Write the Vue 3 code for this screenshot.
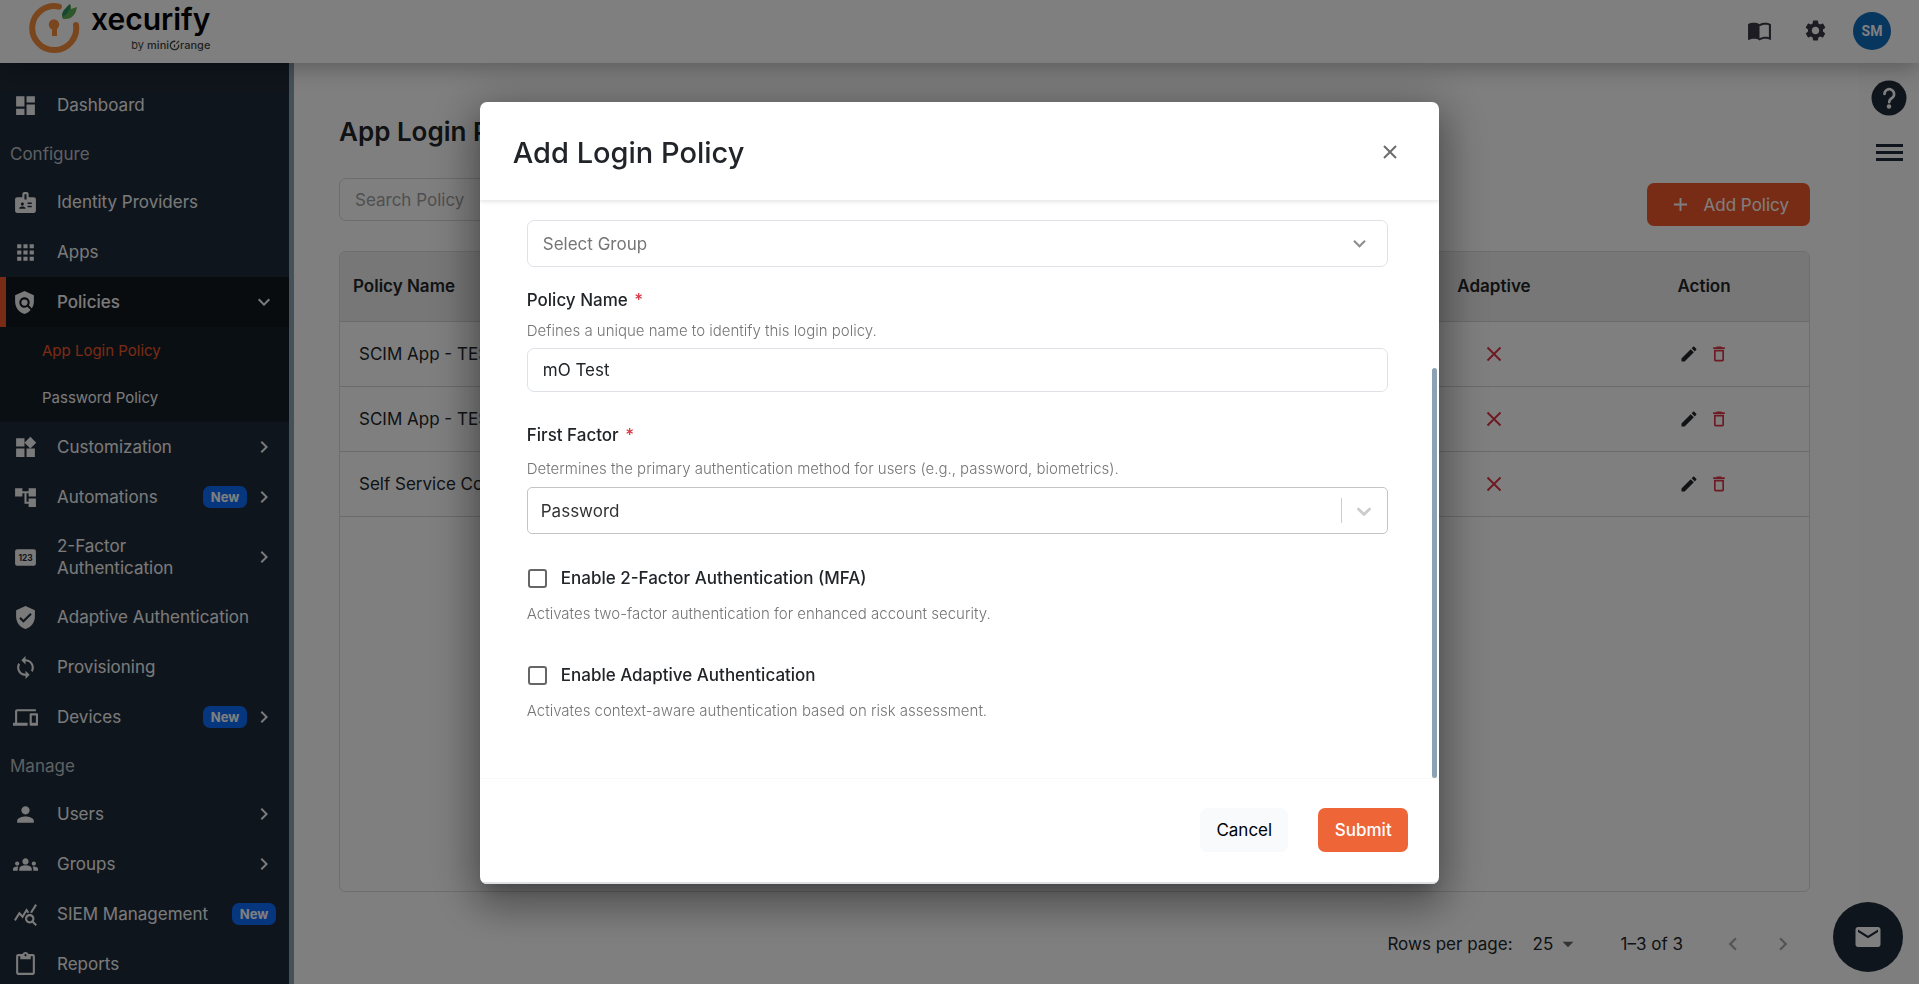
<script setup>
import { ref } from 'vue'

const icons = {
  dashboard: 'M3 13h8V3H3v10zm0 8h8v-6H3v6zm10 0h8V11h-8v10zm0-18v6h8V3h-8z',
  badge: 'M20 7h-5V4c0-1.1-.9-2-2-2h-2c-1.1 0-2 .9-2 2v3H4c-1.1 0-2 .9-2 2v11c0 1.1.9 2 2 2h16c1.1 0 2-.9 2-2V9c0-1.1-.9-2-2-2zM9 12c.83 0 1.5.67 1.5 1.5S9.83 15 9 15s-1.5-.67-1.5-1.5S8.17 12 9 12zm3 6H6v-.75c0-1 2-1.5 3-1.5s3 .5 3 1.5V18zm1-9h-2V4h2v5zm5 7.5h-4V15h4v1.5zm0-3h-4V12h4v1.5z',
  apps: 'M4 8h4V4H4v4zm6 12h4v-4h-4v4zm-6 0h4v-4H4v4zm0-6h4v-4H4v4zm6 0h4v-4h-4v4zm6-10v4h4V4h-4zm-6 4h4V4h-4v4zm6 6h4v-4h-4v4zm0 6h4v-4h-4v4z',
  policy: 'M21 5l-9-4-9 4v6c0 5.55 3.84 10.74 9 12 2.3-.56 4.33-1.9 5.88-3.71l-3.12-3.12c-1.94 1.29-4.58 1.07-6.29-.64-1.95-1.95-1.95-5.12 0-7.07 1.95-1.95 5.12-1.95 7.07 0 1.71 1.71 1.92 4.35.64 6.29l2.9 2.9C20.29 15.69 21 13.38 21 11V5zM12 9a3 3 0 1 0 0 6 3 3 0 0 0 0-6z',
  widgets: 'M13 13v8h8v-8h-8zM3 21h8v-8H3v8zM3 3v8h8V3H3zm13.66-1.31L11 7.34 16.66 13l5.66-5.66-5.66-5.65z',
  tree: 'M22 11V3h-7v3H9V3H2v8h7V8h2v10h4v3h7v-8h-7v3h-2V8h2v3z',
  shield: 'M12 1 3 5v6c0 5.55 3.84 10.74 9 12 5.16-1.26 9-6.45 9-12V5l-9-4zm-2 16-4-4 1.41-1.41L10 14.17l6.59-6.59L18 9l-8 8z',
  sync: 'M12 4V1L8 5l4 4V6c3.31 0 6 2.69 6 6 0 1.01-.25 1.97-.7 2.8l1.46 1.46C19.54 15.03 20 13.57 20 12c0-4.42-3.58-8-8-8zm0 14c-3.31 0-6-2.69-6-6 0-1.01.25-1.97.7-2.8L5.24 7.74C4.46 8.97 4 10.43 4 12c0 4.42 3.58 8 8 8v3l4-4-4-4v3z',
  devices: 'M4 6h18V4H4c-1.1 0-2 .9-2 2v11H0v3h14v-3H4V6zm19 2h-6c-.55 0-1 .45-1 1v10c0 .55.45 1 1 1h6c.55 0 1-.45 1-1V9c0-.55-.45-1-1-1zm-1 9h-4v-7h4v7z',
  person: 'M12 12c2.21 0 4-1.79 4-4s-1.79-4-4-4-4 1.79-4 4 1.79 4 4 4zm0 2c-2.67 0-8 1.34-8 4v2h16v-2c0-2.66-5.33-4-8-4z',
  groups: 'M12 12.75c1.63 0 3.07.39 4.24.9 1.08.48 1.76 1.56 1.76 2.73V18H6v-1.61c0-1.18.68-2.26 1.76-2.73 1.17-.52 2.61-.91 4.24-.91zM4 13c1.1 0 2-.9 2-2s-.9-2-2-2-2 .9-2 2 .9 2 2 2zm1.13 1.1c-.37-.06-.74-.1-1.13-.1-.99 0-1.93.21-2.78.58C.48 14.9 0 15.62 0 16.43V18h4.5v-1.61c0-.83.23-1.61.63-2.29zM20 13c1.1 0 2-.9 2-2s-.9-2-2-2-2 .9-2 2 .9 2 2 2zm4 3.43c0-.81-.48-1.53-1.22-1.85-.85-.37-1.79-.58-2.78-.58-.39 0-.76.04-1.13.1.4.68.63 1.46.63 2.29V18H24v-1.57zM12 6c1.66 0 3 1.34 3 3s-1.34 3-3 3-3-1.34-3-3 1.34-3 3-3z',
  stats: 'M19.88 18.47c.44-.7.7-1.51.7-2.39 0-2.49-2.01-4.5-4.5-4.5s-4.5 2.01-4.5 4.5 2.01 4.5 4.49 4.5c.88 0 1.7-.26 2.39-.7L21.58 23 23 21.58l-3.12-3.11zm-3.8.11c-1.38 0-2.5-1.12-2.5-2.5s1.12-2.5 2.5-2.5 2.5 1.12 2.5 2.5-1.12 2.5-2.5 2.5zm-.36-8.5c-.74.02-1.45.18-2.1.45l-.55-.83-3.8 6.18-3.01-3.52-3.63 5.81L1 17l5-8 3 3.5L13 6l2.72 4.08zm2.59.5c-.64-.28-1.33-.45-2.05-.49L21.38 2 23 3.18l-4.69 7.4z',
  clipboard: 'M19 2h-4.18C14.4.84 13.3 0 12 0c-1.3 0-2.4.84-2.82 2H5c-1.1 0-2 .9-2 2v16c0 1.1.9 2 2 2h14c1.1 0 2-.9 2-2V4c0-1.1-.9-2-2-2zm-7 0c.55 0 1 .45 1 1s-.45 1-1 1-1-.45-1-1 .45-1 1-1zm7 18H5V4h2v3h10V4h2v16z',
  right: 'M10 6 8.59 7.41 13.17 12l-4.58 4.59L10 18l6-6z',
  left: 'M15.41 7.41 14 6l-6 6 6 6 1.41-1.41L10.83 12z',
  down: 'M7.41 8.59 12 13.17l4.59-4.58L18 10l-6 6-6-6z',
  caret: 'M7 10l5 5 5-5z',
  book: 'M21 5c-1.11-.35-2.33-.5-3.5-.5-1.95 0-4.05.4-5.5 1.5-1.45-1.1-3.55-1.5-5.5-1.5S2.45 4.9 1 6v14.65c0 .25.25.5.5.5.1 0 .15-.05.25-.05C3.1 20.45 5.05 20 6.5 20c1.95 0 4.05.4 5.5 1.5 1.35-.85 3.8-1.5 5.5-1.5 1.65 0 3.35.3 4.75 1.05.1.05.15.05.25.05.25 0 .5-.25.5-.5V6c-.6-.45-1.25-.75-2-1zm0 13.5c-1.1-.35-2.3-.5-3.5-.5-1.7 0-4.15.65-5.5 1.5V8c1.35-.85 3.8-1.5 5.5-1.5 1.2 0 2.4.15 3.5.5v11.5z',
  gear: 'M19.14 12.94c.04-.3.06-.61.06-.94 0-.32-.02-.64-.07-.94l2.03-1.58c.18-.14.23-.41.12-.61l-1.92-3.32c-.12-.22-.37-.29-.59-.22l-2.39.96c-.5-.38-1.03-.7-1.62-.94l-.36-2.54c-.04-.24-.24-.41-.48-.41h-3.84c-.24 0-.43.17-.47.41l-.36 2.54c-.59.24-1.13.57-1.62.94l-2.39-.96c-.22-.08-.47 0-.59.22L2.74 8.87c-.12.21-.08.47.12.61l2.03 1.58c-.05.3-.09.63-.09.94s.02.64.07.94l-2.03 1.58c-.18.14-.23.41-.12.61l1.92 3.32c.12.22.37.29.59.22l2.39-.96c.5.38 1.03.7 1.62.94l.36 2.54c.05.24.24.41.48.41h3.84c.24 0 .44-.17.47-.41l.36-2.54c.59-.24 1.13-.56 1.62-.94l2.39.96c.22.08.47 0 .59-.22l1.92-3.32c.12-.22.07-.47-.12-.61l-2.01-1.58zM12 15.6c-1.98 0-3.6-1.62-3.6-3.6s1.62-3.6 3.6-3.6 3.6 1.62 3.6 3.6-1.62 3.6-3.6 3.6z',
  edit: 'M3 17.25V21h3.75L17.81 9.94l-3.75-3.75L3 17.25zM20.71 7.04c.39-.39.39-1.02 0-1.41l-2.34-2.34a1 1 0 0 0-1.41 0l-1.83 1.83 3.75 3.75 1.83-1.83z',
  trash: 'M6 19c0 1.1.9 2 2 2h8c1.1 0 2-.9 2-2V7H6v12zM8 9h8v10H8V9zm7.5-5-1-1h-5l-1 1H5v2h14V4h-3.5z',
  mail: 'M20 4H4c-1.1 0-1.99.9-1.99 2L2 18c0 1.1.9 2 2 2h16c1.1 0 2-.9 2-2V6c0-1.1-.9-2-2-2zm0 4-8 5-8-5V6l8 5 8-5v2z'
}

const nav = [
  { label: 'Dashboard', icon: 'dashboard' },
  { section: 'Configure' },
  { label: 'Identity Providers', icon: 'badge' },
  { label: 'Apps', icon: 'apps' },
  { label: 'Policies', icon: 'policy', open: true, children: ['App Login Policy', 'Password Policy'] },
  { label: 'Customization', icon: 'widgets', more: true },
  { label: 'Automations', icon: 'tree', more: true, isNew: true },
  { label: '2-Factor Authentication', icon: 'pin', more: true, tall: true },
  { label: 'Adaptive Authentication', icon: 'shield' },
  { label: 'Provisioning', icon: 'sync' },
  { label: 'Devices', icon: 'devices', more: true, isNew: true },
  { section: 'Manage' },
  { label: 'Users', icon: 'person', more: true },
  { label: 'Groups', icon: 'groups', more: true },
  { label: 'SIEM Management', icon: 'stats', isNew: true },
  { label: 'Reports', icon: 'clipboard' }
]

const rows = ['SCIM App - TEST', 'SCIM App - TEST', 'Self Service Console']

const search = ref('')
const group = ref('')
const policyName = ref('mO Test')
const firstFactor = ref('Password')
const mfa = ref(false)
const adaptive = ref(false)
const perPage = ref('25')
</script>

<template>
  <div class="app">
    <header class="topbar">
      <a class="brand" href="#" aria-label="xecurify by miniOrange">
        <svg class="brand-mark" viewBox="0 0 52 54" aria-hidden="true">
          <path d="M31 6.600A22 22 0 1 0 48 25" fill="none" stroke="#f58c3c" stroke-width="6" stroke-linecap="round" />
          <path d="M35 19C32 13 36 10 42 4c1 2 1 3 1 5l6-2c-1 7-5 13-14 12z" fill="#5fae57" />
          <path d="M35 17C33 12 37 9 42 4c1 5-2 9-7 13z" fill="#2f8f63" />
          <circle cx="26" cy="24.500" r="5.200" fill="#f58c3c" />
          <path d="M24 27h5v9h-5z" fill="#f58c3c" />
        </svg>
        <span class="brand-text">
          <span class="brand-name">xecurify</span>
          <span class="brand-by">by&nbsp;<b>mini</b>
            <svg viewBox="0 0 12 12" aria-hidden="true">
              <path d="M7 1.500A4.600 4.600 0 1 0 10.500 5" fill="none" stroke="#444" stroke-width="1.400" />
              <path d="M8 4l3-3M6 5v3" stroke="#444" stroke-width="1.400" />
            </svg><b>range</b>
          </span>
        </span>
      </a>
      <div class="top-actions">
        <button class="icon-btn" aria-label="Documentation"><svg viewBox="0 0 24 24"><path :d="icons.book" /></svg></button>
        <button class="icon-btn" aria-label="Settings"><svg viewBox="0 0 24 24"><path :d="icons.gear" /></svg></button>
        <button class="avatar">SM</button>
      </div>
    </header>

    <div class="shell">
      <nav class="sidebar">
        <template v-for="item in nav" :key="item.label || item.section">
          <div v-if="item.section" class="nav-section">{{ item.section }}</div>
          <a v-else href="#" class="nav-item" :class="{ open: item.open, tall: item.tall }">
            <svg v-if="item.icon === 'pin'" class="nav-icon" viewBox="0 0 24 24" aria-hidden="true">
              <path d="M4 4h16a2 2 0 0 1 2 2v12a2 2 0 0 1-2 2H4a2 2 0 0 1-2-2V6a2 2 0 0 1 2-2z" />
              <text class="pin-text" x="12" y="15" text-anchor="middle">123</text>
            </svg>
            <svg v-else class="nav-icon" viewBox="0 0 24 24" aria-hidden="true"><path :d="icons[item.icon]" /></svg>
            <span class="nav-label">{{ item.label }}</span>
            <span v-if="item.isNew" class="new">New</span>
            <svg v-if="item.more || item.open" class="nav-chevron" viewBox="0 0 24 24" aria-hidden="true">
              <path :d="item.open ? icons.down : icons.right" />
            </svg>
          </a>
          <div v-if="item.children" class="subnav">
            <a v-for="(child, i) in item.children" :key="child" href="#" :class="{ current: i === 0 }">{{ child }}</a>
          </div>
        </template>
      </nav>

      <main class="main">
        <h1>App Login Policy</h1>
        <div class="toolbar">
          <input v-model="search" class="search" type="text" placeholder="Search Policy" aria-label="Search Policy" />
          <button class="add">
            <svg viewBox="0 0 16 16" aria-hidden="true"><path d="M8 1v14M1 8h14" stroke="currentColor" stroke-width="2" /></svg>
            Add Policy
          </button>
        </div>
        <div class="table-card">
          <table>
            <thead>
              <tr>
                <th class="name">Policy Name</th>
                <th class="mid">Adaptive</th>
                <th class="mid">Action</th>
              </tr>
            </thead>
            <tbody>
              <tr v-for="(row, i) in rows" :key="i">
                <td class="name">{{ row }}</td>
                <td class="mid">
                  <svg class="cross" viewBox="0 0 16 16" role="img" aria-label="Off"><path d="M1.500 1.500l13 13M14.500 1.500l-13 13" /></svg>
                </td>
                <td class="mid">
                  <span class="row-actions">
                    <button aria-label="Edit"><svg viewBox="0 0 24 24"><path :d="icons.edit" /></svg></button>
                    <button class="danger" aria-label="Delete"><svg viewBox="0 0 24 24"><path :d="icons.trash" /></svg></button>
                  </span>
                </td>
              </tr>
            </tbody>
          </table>
        </div>
        <div class="pager">
          <label for="per-page">Rows per page:</label>
          <span class="per-page">
            <select id="per-page" v-model="perPage"><option>25</option><option>50</option></select>
            <svg viewBox="0 0 24 24" aria-hidden="true"><path :d="icons.caret" /></svg>
          </span>
          <span class="range">1–3 of 3</span>
          <button aria-label="Previous page"><svg viewBox="0 0 24 24"><path :d="icons.left" /></svg></button>
          <button aria-label="Next page"><svg viewBox="0 0 24 24"><path :d="icons.right" /></svg></button>
        </div>
      </main>

      <aside class="rail">
        <button aria-label="Help">
          <svg class="help" viewBox="0 0 36 36">
            <circle cx="18" cy="18" r="17.500" fill="#1f2b38" />
            <path d="M13.500 14a4.800 4.800 0 1 1 7.300 4.100c-1.900 1.200-2.600 2-2.600 4.200" fill="none" stroke="#fff" stroke-width="2.600" stroke-linecap="round" />
            <circle cx="18" cy="26.500" r="2.200" fill="#fff" />
          </svg>
        </button>
        <button class="burger" aria-label="Menu"><i></i><i></i><i></i></button>
      </aside>
    </div>

    <button class="fab" aria-label="Contact us"><svg viewBox="0 0 24 24"><path :d="icons.mail" /></svg></button>

    <div class="backdrop">
      <section class="modal" role="dialog" aria-modal="true" aria-labelledby="modal-title">
        <div class="modal-head">
          <h2 id="modal-title">Add Login Policy</h2>
          <button class="close" aria-label="Close"><svg viewBox="0 0 14 14"><path d="M1 1l12 12M13 1L1 13" /></svg></button>
        </div>
        <form class="modal-body" @submit.prevent>
          <div class="select group">
            <select v-model="group" aria-label="Select Group">
              <option value="" disabled>Select Group</option>
            </select>
            <svg viewBox="0 0 24 24" aria-hidden="true"><path :d="icons.down" /></svg>
          </div>

          <label class="label" for="policy-name">Policy Name <em>*</em></label>
          <p class="hint">Defines a unique name to identify this login policy.</p>
          <input id="policy-name" v-model="policyName" class="text" type="text" />

          <label class="label second" for="first-factor">First Factor <em>*</em></label>
          <p class="hint wide">Determines the primary authentication method for users (e.g., password, biometrics).</p>
          <div class="select factor">
            <select id="first-factor" v-model="firstFactor"><option>Password</option></select>
            <span class="divider"></span>
            <svg viewBox="0 0 20 20" aria-hidden="true"><path d="M4.516 7.548c.436-.446 1.043-.481 1.576 0L10 11.295l3.908-3.747c.533-.481 1.141-.446 1.574 0 .436.445.408 1.197 0 1.615-.406.418-4.695 4.502-4.695 4.502a1.095 1.095 0 0 1-1.576 0S4.924 9.581 4.516 9.163s-.436-1.170 0-1.615z" /></svg>
          </div>

          <div class="toggle">
            <label class="check"><input v-model="mfa" type="checkbox" />Enable 2-Factor Authentication (MFA)</label>
            <p class="hint">Activates two-factor authentication for enhanced account security.</p>
          </div>
          <div class="toggle">
            <label class="check"><input v-model="adaptive" type="checkbox" />Enable Adaptive Authentication</label>
            <p class="hint">Activates context-aware authentication based on risk assessment.</p>
          </div>
          <span class="thumb"></span>
        </form>
        <div class="modal-foot">
          <button class="cancel">Cancel</button>
          <button class="submit">Submit</button>
        </div>
      </section>
    </div>
  </div>
</template>

<style>
body {
  overflow: hidden;
}
</style>

<style scoped>
.app {
  display: flex;
  flex-direction: column;
  height: 100vh;
  overflow: hidden;
  position: relative;
  background: #fff;
  color: #212529;
  font-family: Inter, "Noto Sans", sans-serif;
  font-size: 17px;
}
.app * {
  box-sizing: border-box;
}
button,
input,
select {
  font: inherit;
  color: inherit;
}
button {
  border: 0;
  padding: 0;
  background: none;
  display: flex;
  align-items: center;
  justify-content: center;
}
a {
  text-decoration: none;
  color: inherit;
}
svg {
  fill: currentColor;
  display: block;
  flex: none;
}

/* Top bar */
.topbar {
  flex: none;
  display: flex;
  align-items: center;
  justify-content: space-between;
  height: 63px;
  padding: 0 28px;
  background: #fff;
  box-shadow: 0 4px 24px rgba(0, 0, 0, 0.3);
  position: relative;
  z-index: 1;
}
.brand {
  display: flex;
  gap: 11px;
  height: 63px;
}
.brand-mark {
  width: 52px;
  height: 54px;
}
.brand-text {
  display: flex;
  flex-direction: column;
  align-items: flex-end;
}
.brand-name {
  font-size: 30px;
  font-weight: 600;
  line-height: 38px;
  color: #000;
}
.brand-by {
  display: flex;
  align-items: center;
  font-size: 11px;
  line-height: 14px;
  color: #444;
}
.brand-by b {
  font-weight: 500;
}
.brand-by svg {
  width: 11px;
  height: 11px;
}
.top-actions {
  display: flex;
  align-items: center;
  padding-bottom: 2px;
}
.icon-btn {
  width: 56px;
  height: 40px;
  color: #3a3847;
}
.icon-btn svg {
  width: 25px;
  height: 25px;
}
.avatar {
  width: 38px;
  height: 38px;
  margin-left: 10px;
  border-radius: 50%;
  background: #0f6cbd;
  color: #fff;
  font: 700 14px Roboto, sans-serif;
}

/* Sidebar */
.shell {
  flex: 1;
  display: flex;
  min-height: 0;
}
.sidebar {
  flex: none;
  width: 294px;
  padding-top: 17px;
  overflow: hidden;
  background: #1f2b38;
  border-right: 5px solid #8aa2b3;
  color: #f4f5f7;
}
.nav-section {
  height: 47px;
  padding-left: 10px;
  line-height: 48px;
  color: #bcc1c6;
}
.nav-item {
  display: flex;
  align-items: center;
  height: 50px;
  padding: 0 13px;
}
.nav-item.tall {
  height: 70px;
}
.nav-item.open {
  background: #12181e;
  padding-left: 6px;
  border-left: 6px solid #f1592a;
  font-weight: 500;
}
.nav-icon {
  width: 25px;
  height: 25px;
  margin-right: 19px;
}
.nav-item.open .nav-icon {
  margin-right: 20px;
}
.pin-text {
  font: 700 8px Inter, sans-serif;
  fill: #1f2b38;
}
.nav-label {
  flex: 1;
  line-height: 22px;
}
.tall .nav-label {
  padding-right: 60px;
}
.nav-chevron {
  width: 24px;
  height: 24px;
  margin-left: 5px;
}
.new {
  width: 44px;
  height: 22px;
  border-radius: 7px;
  background: #0d6efd;
  color: #fff;
  font-size: 13px;
  font-weight: 700;
  line-height: 22px;
  text-align: center;
}
.subnav {
  height: 95px;
  background: #151e27;
}
.subnav a {
  display: block;
  height: 47px;
  padding-left: 42px;
  font-size: 15px;
  line-height: 47px;
}
.subnav .current {
  color: #f1592a;
}

/* Main area */
.main {
  flex: 1;
  display: flex;
  flex-direction: column;
  min-width: 0;
  padding: 50px 49px 0 45px;
}
h1 {
  margin: 0;
  font-size: 26px;
  font-weight: 600;
  line-height: 38px;
}
.toolbar {
  display: flex;
  align-items: flex-start;
  justify-content: space-between;
  margin-top: 27px;
}
.search {
  width: 320px;
  height: 43px;
  padding: 0 15px;
  border: 1px solid #d5dbdf;
  border-radius: 7px;
  background: #fff;
  outline: none;
}
.search::placeholder {
  color: #a0a0a0;
  opacity: 1;
}
.add {
  height: 43px;
  margin-top: 5px;
  padding: 0 21px 0 26px;
  gap: 16px;
  border-radius: 7px;
  background: #f1592a;
  color: #fff;
}
.add svg {
  width: 15px;
  height: 15px;
}
.table-card {
  flex: 1;
  margin-top: 25px;
  border: 1px solid #dadde0;
  border-radius: 6px;
  overflow: hidden;
}
table {
  width: 100%;
  table-layout: fixed;
  border-collapse: collapse;
}
th {
  height: 69px;
  background: #eee;
  font-weight: 600;
}
td {
  height: 65px;
}
th,
td {
  padding: 0;
  border-bottom: 1px solid #d4d6d8;
}
.name {
  text-align: left;
}
th.name {
  padding-left: 13px;
}
td.name {
  padding-left: 19px;
}
.mid {
  width: 210px;
  text-align: center;
}
.cross {
  width: 16px;
  height: 16px;
  margin: 0 auto;
  fill: none;
  stroke: #dc3545;
  stroke-width: 2;
}
.row-actions {
  display: flex;
  justify-content: center;
  gap: 10px;
}
.row-actions svg {
  width: 20px;
  height: 20px;
}
.danger {
  color: #dc3545;
}
.pager {
  flex: none;
  display: flex;
  align-items: center;
  justify-content: flex-end;
  height: 92px;
  padding: 12px 2px 0 0;
}
.pager svg {
  width: 26px;
  height: 26px;
}
.per-page {
  display: flex;
  align-items: center;
  margin-left: 20px;
}
.per-page select {
  width: 22px;
  height: 32px;
  border: 0;
  background: none;
  appearance: none;
  outline: none;
}
.per-page svg {
  color: #666;
}
.range {
  margin: 0 25px 0 40px;
}
.pager button {
  width: 50px;
  height: 40px;
  color: #a8a8a8;
}

/* Right rail */
.rail {
  flex: none;
  display: flex;
  flex-direction: column;
  align-items: center;
  gap: 28px;
  width: 60px;
  padding-top: 17px;
  background: #fcfcfc;
}
.help {
  width: 36px;
  height: 36px;
}
.burger {
  flex-direction: column;
  gap: 4px;
}
.burger i {
  width: 27px;
  height: 3px;
  background: #1f2b38;
}
.fab {
  position: absolute;
  right: 16px;
  bottom: 12px;
  width: 70px;
  height: 70px;
  border-radius: 50%;
  background: #1f2b38;
  color: #fff;
}
.fab svg {
  width: 30px;
  height: 30px;
}

/* Dialog */
.backdrop {
  position: fixed;
  inset: 0;
  z-index: 2;
  display: flex;
  align-items: flex-start;
  justify-content: center;
  padding-top: 102px;
  background: rgba(0, 0, 0, 0.5);
}
.modal {
  width: 50%;
  min-width: 720px;
  border-radius: 7px;
  overflow: hidden;
  background: #fff;
  box-shadow: 0 11px 15px -7px rgba(0, 0, 0, 0.2), 0 24px 38px 3px rgba(0, 0, 0, 0.14), 0 9px 46px 8px rgba(0, 0, 0, 0.3);
}
.modal-head {
  display: flex;
  align-items: center;
  justify-content: space-between;
  height: 98px;
  padding: 2px 42px 0 33px;
  position: relative;
  box-shadow: 0 2px 4px rgba(0, 0, 0, 0.1);
}
h2 {
  margin: 0;
  font-size: 29px;
  font-weight: 500;
}
.close svg {
  width: 14px;
  height: 14px;
  fill: none;
  stroke: #6c6c6c;
  stroke-width: 2;
}
.modal-body {
  display: flex;
  flex-direction: column;
  position: relative;
  padding: 20px 51px 50px 47px;
  border-bottom: 1px solid #f8f8f8;
}
.select {
  display: flex;
  align-items: center;
  position: relative;
  height: 47px;
}
.select select {
  flex: 1;
  height: 100%;
  border: 1px solid #dee2e6;
  border-radius: 7px;
  background: #fff;
  appearance: none;
  outline: none;
}
.group select {
  padding: 0 15px;
  color: #757575;
}
.group svg {
  position: absolute;
  right: 16px;
  width: 25px;
  height: 25px;
  color: #8e8e8e;
  pointer-events: none;
}
.factor select {
  padding: 0 13px;
  border-color: #c4c4c4;
  border-radius: 5px;
  color: #333;
}
.divider {
  position: absolute;
  right: 46px;
  width: 1px;
  height: 25px;
  background: #ccc;
}
.factor svg {
  position: absolute;
  right: 12px;
  width: 24px;
  height: 24px;
  color: #ccc;
  pointer-events: none;
}
.label {
  margin-top: 21px;
  font-weight: 500;
  line-height: 24px;
}
.label.second {
  margin-top: 31px;
}
.label em {
  margin-left: 2px;
  font-style: normal;
  color: #dc3545;
}
.hint {
  margin: 9px 0 7px;
  font-size: 15px;
  font-weight: 300;
  line-height: 20px;
  color: #757575;
}
.hint.wide {
  margin: 12px 0 8px;
}
.text {
  height: 44px;
  padding: 0 15px;
  border: 1px solid #dee2e6;
  border-radius: 7px;
  outline: none;
}
.toggle {
  margin-top: 32px;
}
.check {
  display: flex;
  align-items: center;
  gap: 14px;
  height: 24px;
  font-weight: 500;
}
.check input {
  width: 19px;
  height: 19px;
  margin: 0 0 0 1px;
  border: 2px solid #666;
  border-radius: 3px;
  appearance: none;
}
.toggle .hint {
  margin: 14px 0 7px;
}
.thumb {
  position: absolute;
  right: 2px;
  top: 29%;
  bottom: 0;
  width: 5px;
  border-radius: 3px;
  background: #8aa2b3;
}
.modal-foot {
  display: flex;
  justify-content: flex-end;
  gap: 30px;
  padding: 29px 31px 30px;
  border-bottom: 2px solid #dde1e3;
}
.modal-foot button {
  height: 44px;
  border-radius: 7px;
}
.cancel {
  min-width: 88px;
  background: #f8fafb;
  color: #000;
}
.submit {
  min-width: 90px;
  background: #ee6538;
  color: #fff;
  font-weight: 500;
}
</style>
